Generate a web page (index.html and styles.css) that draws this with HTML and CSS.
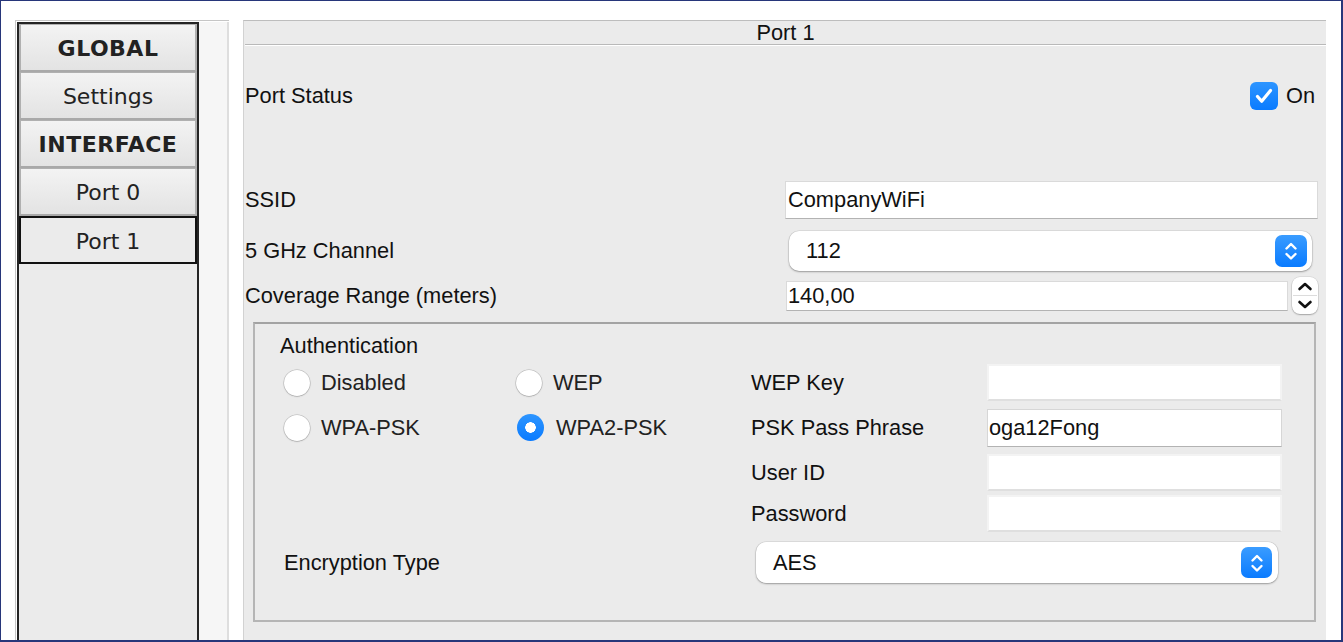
FILE: index.html
```html
<!DOCTYPE html>
<html lang="en">
<head>
    <meta charset="UTF-8">
    <meta name="viewport" content="width=device-width, initial-scale=1.0">
    <title>Port 1</title>
    <link rel="stylesheet" href="styles.css">
</head>
<body>
    <div class="screen">
        <div class="sidebar">
            <ul class="menu">
                <li class="menu-item head">GLOBAL</li>
                <li class="menu-item">Settings</li>
                <li class="menu-item head">INTERFACE</li>
                <li class="menu-item">Port 0</li>
                <li class="menu-item active">Port 1</li>
            </ul>
            <div class="gutter"></div>
        </div>

        <div class="panel">
            <div class="panel-title">Port 1</div>

            <div class="row row-status">
                <span class="label">Port Status</span>
                <label class="check">
                    <span class="check-box">
                        <svg width="28" height="28" viewBox="0 0 28 28"><path d="M7.5 14.5l4.2 4.8L20.5 8.5" stroke="#fff" stroke-width="3.2" fill="none" stroke-linecap="round" stroke-linejoin="round"/></svg>
                    </span>
                    On
                </label>
            </div>

            <div class="row row-ssid">
                <span class="label">SSID</span>
                <input class="text-input ssid" type="text" value="CompanyWiFi">
            </div>

            <div class="row row-channel">
                <span class="label">5 GHz Channel</span>
                <div class="select channel">
                    <span class="select-value">112</span>
                    <span class="select-btn">
                        <svg width="32" height="32" viewBox="0 0 32 32"><path d="M11.5 13.5l4.5-4.5 4.5 4.5M11.5 19l4.5 4.5 4.5-4.5" stroke="#fff" stroke-width="2.4" fill="none" stroke-linecap="round" stroke-linejoin="round"/></svg>
                    </span>
                </div>
            </div>

            <div class="row row-range">
                <span class="label">Coverage Range (meters)</span>
                <input class="text-input range" type="text" value="140,00">
                <span class="spinner">
                    <svg width="26" height="37" viewBox="0 0 26 37"><path d="M7.5 12l5.5-5 5.5 5" stroke="#111" stroke-width="2.6" fill="none" stroke-linecap="round" stroke-linejoin="round"/><path d="M1 18.5h24" stroke="#dcdcdc" stroke-width="1"/><path d="M7.5 25l5.5 5 5.5-5" stroke="#111" stroke-width="2.6" fill="none" stroke-linecap="round" stroke-linejoin="round"/></svg>
                </span>
            </div>

            <div class="auth">
                <div class="auth-title">Authentication</div>
                <div class="auth-grid">
                    <label class="radio"><span class="radio-dot"></span>Disabled</label>
                    <label class="radio"><span class="radio-dot"></span>WEP</label>
                    <span class="field-label">WEP Key</span>
                    <input class="field off" type="text" value="">

                    <label class="radio"><span class="radio-dot"></span>WPA-PSK</label>
                    <label class="radio"><span class="radio-dot on"></span>WPA2-PSK</label>
                    <span class="field-label">PSK Pass Phrase</span>
                    <input class="field" type="text" value="oga12Fong">

                    <span></span>
                    <span></span>
                    <span class="field-label">User ID</span>
                    <input class="field off" type="text" value="">

                    <span></span>
                    <span></span>
                    <span class="field-label">Password</span>
                    <input class="field off" type="text" value="">
                </div>

                <div class="enc-row">
                    <span class="enc-label">Encryption Type</span>
                    <div class="select enc">
                        <span class="select-value">AES</span>
                        <span class="select-btn">
                            <svg width="32" height="32" viewBox="0 0 32 32"><path d="M11.5 13.5l4.5-4.5 4.5 4.5M11.5 19l4.5 4.5 4.5-4.5" stroke="#fff" stroke-width="2.4" fill="none" stroke-linecap="round" stroke-linejoin="round"/></svg>
                        </span>
                    </div>
                </div>
            </div>
        </div>
    </div>
</body>
</html>
```

FILE: styles.css
```css
* {
    box-sizing: border-box;
}

body {
    margin: 0;
    background: #fff;
    font-family: "Liberation Sans", Arial, sans-serif;
    color: #111;
}

.screen {
    width: 1343px;
    height: 642px;
    border: solid #27367a;
    border-width: 1px 2px 2px 1px;
    padding: 19px 0 0 14px;
    display: flex;
    align-items: stretch;
    overflow: hidden;
    background: #fff;
}

/* left menu */
.sidebar {
    width: 214px;
    flex: none;
    display: flex;
    border-top: 1px solid #c6c6c6;
    border-left: 1px solid #c6c6c6;
    padding: 1px 0 0 1px;
}

.menu {
    width: 182px;
    margin: 0;
    padding: 0;
    list-style: none;
    background: #ebebeb;
    border: 2px solid #242424;
    border-bottom: none;
}

.menu-item {
    height: 48px;
    line-height: 48px;
    overflow: hidden;
    text-align: center;
    font-family: "DejaVu Sans", Verdana, sans-serif;
    font-size: 22px;
    color: #222;
    background: linear-gradient(#f3f3f3, #e3e3e3);
    border: 1px solid #b0b0b0;
    border-bottom: 2px solid #a9a9a9;
    border-left-width: 2px;
    border-right-width: 2px;
}

.menu-item.head {
    font-weight: bold;
    letter-spacing: 0.5px;
}

.menu-item.active {
    background: #ebebeb;
    border: 2px solid #111;
}

.gutter {
    flex: 1;
    background: #f6f6f6;
    border-right: 2px solid #dedede;
}

/* main panel */
.panel {
    width: 1083px;
    margin-left: 14px;
    flex: none;
    background: #ebebeb;
    border-top: 1px solid #bdbdbd;
    border-left: 1px solid #d2d2d2;
    padding-left: 1px;
    font-size: 21.8px;
}

.panel-title {
    height: 24px;
    line-height: 23px;
    text-align: center;
    border-bottom: 1px solid #b9b9b9;
    box-shadow: 0 1px 0 #fff;
}

.row {
    display: flex;
    align-items: center;
}

.label {
    flex: 1;
}

.row-status {
    height: 28px;
    margin-top: 37px;
}

.row-ssid {
    height: 38px;
    margin-top: 71px;
}

.row-channel {
    height: 40px;
    margin-top: 12px;
}

.row-range {
    height: 37px;
    margin-top: 6px;
}

.check {
    display: flex;
    align-items: center;
    gap: 8px;
    margin-right: 11px;
}

.check-box {
    width: 28px;
    height: 28px;
    border-radius: 6px;
    background: linear-gradient(#2d95ff, #0a7bff);
    display: block;
}

.check-box svg {
    display: block;
}

.text-input {
    font: inherit;
    color: #111;
    background: #fff;
    border: 1px solid #dadada;
    border-bottom-color: #b3b3b3;
    outline: none;
    margin: 0;
}

.ssid {
    width: 533px;
    height: 38px;
    padding: 0 2px;
    margin-right: 8px;
}

.range {
    width: 502px;
    height: 30px;
    padding: 0 1px;
}

.spinner {
    width: 26px;
    height: 37px;
    margin: 0 8px 0 4px;
    background: #fff;
    border-radius: 8px;
    box-shadow: 0 0 0 0.5px rgba(0, 0, 0, .12), 0 1px 1.5px rgba(0, 0, 0, .25);
}

.spinner svg {
    display: block;
}

.select {
    position: relative;
    height: 40px;
    background: #fff;
    border-radius: 10px;
    box-shadow: 0 0 0 0.5px rgba(0, 0, 0, .12), 0 1px 2px rgba(0, 0, 0, .3);
    display: flex;
    align-items: center;
    padding-left: 17px;
}

.channel {
    width: 523px;
    margin-right: 14px;
}

.select-btn {
    position: absolute;
    right: 5px;
    top: 4px;
    width: 32px;
    height: 32px;
    border-radius: 7px;
    background: linear-gradient(#3a9cff, #0a7bff);
}

.select-btn svg {
    display: block;
}

/* authentication group */
.auth {
    margin: 8px 10px 0 8px;
    border: 2px solid #b5b5b5;
    border-top-color: #a3a3a3;
    padding: 10px 0 37px 29px;
}

.auth-title {
    line-height: 24px;
    margin-left: -4px;
}

.auth-grid {
    display: grid;
    grid-template-columns: 232px 235px 236px 295px;
    grid-template-rows: 45px 45px 41px 37px;
    margin-top: 6px;
}

.radio {
    height: 37px;
    display: flex;
    align-items: center;
    color: #222;
}

.radio-dot {
    width: 26px;
    height: 26px;
    border-radius: 50%;
    background: #fff;
    margin-right: 11px;
    box-shadow: 0 0 0 0.5px rgba(0, 0, 0, .2), 0 0.5px 1.5px rgba(0, 0, 0, .25);
}

.radio-dot.on {
    width: 27px;
    height: 27px;
    margin-left: 1px;
    margin-right: 12px;
    background: radial-gradient(circle, #fff 0 5px, transparent 5.5px), linear-gradient(#2d95ff, #0a7bff);
    box-shadow: none;
}

.field-label {
    height: 37px;
    display: flex;
    align-items: center;
}

.field {
    font: inherit;
    color: #111;
    width: 295px;
    height: 38px;
    margin: 0;
    padding: 0 1px;
    background: #fff;
    border: 1px solid #d6d6d6;
    border-bottom-color: #b3b3b3;
    outline: none;
}

.field.off {
    height: 37px;
    border: 2px solid #f3f3f3;
    border-bottom-color: #dfdfdf;
}

.enc-row {
    display: flex;
    align-items: center;
    margin-top: 10px;
    height: 41px;
}

.enc-label {
    width: 472px;
}

.enc {
    width: 522px;
    height: 41px;
}

.enc .select-btn {
    right: 6px;
    top: 5px;
    width: 31px;
    height: 31px;
}
```
